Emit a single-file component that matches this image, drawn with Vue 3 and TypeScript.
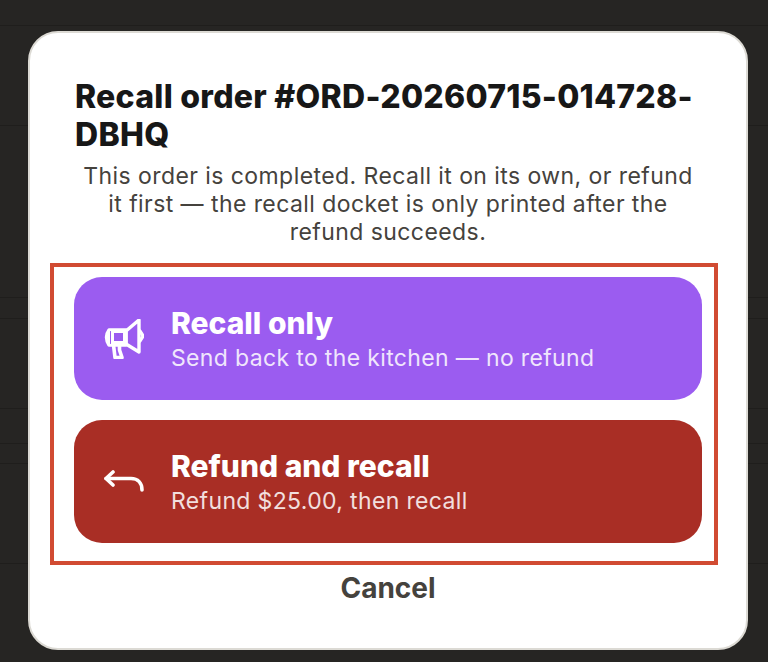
<script setup lang="ts">
interface Choice {
  id: string
  title: string
  sub: string
}
const choices: Choice[] = [
  { id: 'recall', title: 'Recall only', sub: 'Send back to the kitchen — no refund' },
  { id: 'refund', title: 'Refund and recall', sub: 'Refund $25.00, then recall' },
]
</script>

<template>
  <div class="page">
    <section class="modal">
      <h1 class="title">Recall order #ORD-20260715-014728-DBHQ</h1>
      <p class="desc">This order is completed. Recall it on its own, or refund it first — the recall docket is only printed after the refund succeeds.</p>
      <div class="actions">
        <button v-for="c in choices" :key="c.id" class="choice" :class="c.id">
          <svg v-if="c.id === 'recall'" class="icon" viewBox="0 0 40 40" fill="none" stroke="currentColor" stroke-width="3.4" stroke-linecap="round" stroke-linejoin="round">
            <path d="M22 12 L35 1 V33 L22 25 Z" />
            <path d="M22 11 H5 Q0 18 5 26 H22 Z" fill="currentColor" />
            <path d="M36 12 L39 17 L36 22" />
            <path d="M6.5 12.5 V24.5" class="cut" stroke-width="1" />
            <rect x="10" y="14" width="9" height="8" fill="#9b5cf0" stroke="none" />
            <path d="M9.5 26 L11 38.5 H18 L15.5 31 V26" stroke-width="3.6" />
          </svg>
          <svg v-else class="icon" viewBox="0 0 40 40" fill="none" stroke="currentColor" stroke-width="3.6" stroke-linecap="round" stroke-linejoin="round">
            <path d="M9 10 L2 16.5 L9 23" />
            <path d="M2 16.5 H27 C34 16.5 38 21 38 28" />
          </svg>
          <span class="text">
            <span class="name">{{ c.title }}</span>
            <span class="sub">{{ c.sub }}</span>
          </span>
        </button>
        <div class="marker" aria-hidden="true"></div>
      </div>
      <button class="cancel">Cancel</button>
    </section>
  </div>
</template>

<style>
html, body { margin: 0; background: #262523; }
</style>

<style scoped>
.page {
  box-sizing: border-box;
  width: 768px;
  height: 662px;
  padding: 31px 20px 12px 28px;
  overflow: hidden;
  font-family: Inter, "Liberation Sans", sans-serif;
  background-color: #262523;
  background-image:
    linear-gradient(#1f1e1c, #1f1e1c), linear-gradient(#1f1e1c, #1f1e1c),
    linear-gradient(#1f1e1c, #1f1e1c), linear-gradient(#1f1e1c, #1f1e1c),
    linear-gradient(#1f1e1c, #1f1e1c), linear-gradient(#1f1e1c, #1f1e1c),
    linear-gradient(#1f1e1c, #1f1e1c), linear-gradient(#1f1e1c, #1f1e1c);
  background-repeat: no-repeat;
  background-size: 100% 1px;
  background-position: 0 25px, 0 125px, 0 297px, 0 318px, 0 408px, 0 443px, 0 463px, 0 563px;
}
.modal {
  box-sizing: border-box;
  width: 720px;
  height: 619px;
  padding: 45px 44px 0;
  background: #fff;
  border: 2px solid #dcdad4;
  border-radius: 30px;
  display: flex;
  flex-direction: column;
}
.title {
  margin: 0 0 0 1px;
  font-size: 32px;
  line-height: 38px;
  font-weight: 800;
  letter-spacing: 0.27px;
  color: #171717;
}
.desc {
  margin: 8px 0 0;
  font-size: 23px;
  line-height: 28px;
  font-weight: 400;
  letter-spacing: 0.43px;
  text-align: center;
  color: #45423d;
}
.actions {
  position: relative;
  margin-top: 31px;
  display: flex;
  flex-direction: column;
  gap: 20px;
}
.marker {
  position: absolute;
  inset: -14px -16px -22px -24px;
  border: 4px solid #d14b32;
  pointer-events: none;
}
.choice {
  box-sizing: border-box;
  height: 123px;
  padding: 0 28px 0 30px;
  border: 0;
  border-radius: 28px;
  display: flex;
  align-items: center;
  gap: 27px;
  text-align: left;
  font-family: inherit;
  color: #fff;
}
.recall { background: #9b5cf0; }
.refund { background: #a92e25; }
.icon { width: 40px; height: 40px; flex: none; }
.cut { stroke: #9b5cf0; }
.text { display: flex; flex-direction: column; }
.name {
  font-size: 30px;
  line-height: 36px;
  font-weight: 800;
}
.sub {
  margin-top: 2px;
  font-size: 23px;
  line-height: 30px;
  letter-spacing: 0.35px;
  opacity: 0.85;
}
.cancel {
  margin-top: 27px;
  padding: 0;
  border: 0;
  background: none;
  font-family: inherit;
  font-size: 28px;
  line-height: 36px;
  font-weight: 700;
  color: #45423d;
  text-align: center;
}
</style>
